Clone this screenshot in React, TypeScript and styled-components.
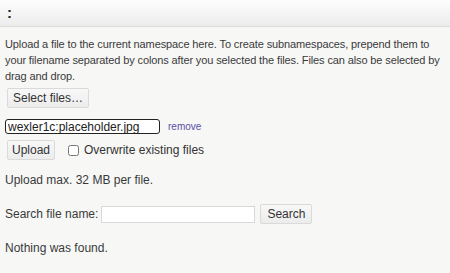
import React from 'react'
import styled, { createGlobalStyle } from 'styled-components'

const Global = createGlobalStyle`
  html, body {
    margin: 0;
    padding: 0;
    background: #f7f7f6;
  }
  body {
    font-family: 'Liberation Sans', Arial, sans-serif;
    font-size: 12px;
    color: #3a3a3a;
  }
`

const Header = styled.div`
  height: 27px;
  border-bottom: 1px solid #dcdcdc;
  background: linear-gradient(#fdfdfd, #ececec);
  padding: 6px 0 0 7px;
  box-sizing: border-box;
  font-size: 15px;
  font-weight: bold;
  color: #222;
  line-height: 14px;
`

const Body = styled.div`
  padding: 9px 5px 0 5px;
`

const Para = styled.p`
  margin: 0 0 4px;
  font-size: 11px;
  letter-spacing: -0.12px;
  line-height: 16px;
`

const Btn = styled.button<{ $px?: number }>`
  font-family: inherit;
  font-size: 12px;
  color: #333;
  background: linear-gradient(#f8f8f8, #ececec);
  border: 1px solid #dadada;
  border-radius: 2px;
  padding: 0 ${(p) => p.$px ?? 5}px;
  height: 20px;
  margin: 0 0 0 2px;
`

const Row = styled.div<{ $gap?: number; $mt?: number }>`
  display: flex;
  align-items: center;
  gap: ${(p) => p.$gap ?? 6}px;
  margin-top: ${(p) => p.$mt ?? 0}px;
`

const FileName = styled.input`
  font-family: inherit;
  font-size: 12px;
  color: #222;
  width: 155px;
  height: 15px;
  box-sizing: border-box;
  border: 1.5px solid #222;
  border-radius: 3px;
  padding: 0 2px;
  background: #fff;
`

const Remove = styled.a`
  color: #5a4fa8;
  font-size: 10px;
  text-decoration: none;
`

const Check = styled.label`
  display: flex;
  align-items: center;
  gap: 5px;
  color: #333;
  input {
    margin: 0;
    width: 11px;
    height: 11px;
  }
`

const Note = styled.div<{ $mt: number }>`
  margin-top: ${(p) => p.$mt}px;
  line-height: 16px;
`

const SearchInput = styled.input`
  width: 154px;
  height: 17px;
  box-sizing: border-box;
  border: 1px solid #d8d8d8;
  background: #fff;
`

export default function App() {
  return (
    <>
      <Global />
      <Header>:</Header>
      <Body>
        <Para>
          Upload a file to the current namespace here. To create subnamespaces, prepend them to
          your filename separated by colons after you selected the files. Files can also be selected by
          drag and drop.
        </Para>
        <Btn>Select files…</Btn>
        <Row $mt={11} $gap={8}>
          <FileName defaultValue="wexler1c:placeholder.jpg" />
          <Remove href="#">remove</Remove>
        </Row>
        <Row $mt={6} $gap={13}>
          <Btn $px={4}>Upload</Btn>
          <Check>
            <input type="checkbox" />
            Overwrite existing files
          </Check>
        </Row>
        <Note $mt={12}>Upload max. 32 MB per file.</Note>
        <Row $mt={16} $gap={3}>
          <span>Search file name:</span>
          <SearchInput />
          <Btn $px={6}>Search</Btn>
        </Row>
        <Note $mt={16}>Nothing was found.</Note>
      </Body>
    </>
  )
}
